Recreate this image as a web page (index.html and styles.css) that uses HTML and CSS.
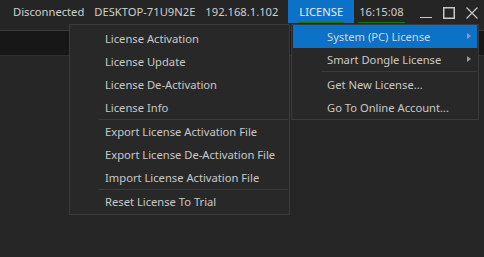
FILE: index.html
```html
<!DOCTYPE html>
<html lang="en">
<head>
  <meta charset="UTF-8">
  <title>License</title>
  <meta name="viewport" content="width=device-width, initial-scale=1.0">
  <link rel="stylesheet" href="styles.css">
</head>
<body>
  <div class="titlebar">
    <span class="status">Disconnected</span>
    <span class="status">DESKTOP-71U9N2E</span>
    <span class="status">192.168.1.102</span>
    <span class="license-btn"><span class="mark">LICENSE</span></span>
    <span class="clock"><span class="mark">16:15:08</span></span>
    <div class="controls">
      <span class="ctl">
        <svg width="12" height="12" viewBox="0 0 12 12"><line x1="0" y1="10.5" x2="12" y2="10.5" stroke="#c8c8c8" stroke-width="1"/></svg>
      </span>
      <span class="ctl">
        <svg width="12" height="12" viewBox="0 0 12 12"><rect x="0.75" y="0.75" width="10.5" height="10.5" fill="none" stroke="#c8c8c8" stroke-width="1.5"/></svg>
      </span>
      <span class="ctl">
        <svg width="12" height="12" viewBox="0 0 12 12"><path d="M0.5 0.5 L11.5 11.5 M11.5 0.5 L0.5 11.5" stroke="#c8c8c8" stroke-width="1.2"/></svg>
      </span>
    </div>
  </div>
  <div class="toolbar"></div>
  <div class="workspace"></div>

  <!-- sous-menu System (PC) License -->
  <div class="menu menu-system">
    <div class="item">License Activation</div>
    <div class="item">License Update</div>
    <div class="item">License De-Activation</div>
    <div class="item">License Info</div>
    <div class="sep"></div>
    <div class="item">Export License Activation File</div>
    <div class="item">Export License De-Activation File</div>
    <div class="item">Import License Activation File</div>
    <div class="sep"></div>
    <div class="item">Reset License To Trial</div>
  </div>

  <!-- menu LICENSE -->
  <div class="menu menu-license">
    <div class="item active">System (PC) License<span class="arrow"></span></div>
    <div class="item">Smart Dongle License<span class="arrow"></span></div>
    <div class="sep"></div>
    <div class="item">Get New License...</div>
    <div class="item">Go To Online Account...</div>
  </div>
</body>
</html>
```

FILE: styles.css
```css
html, body {
  height: 100%;
  margin: 0;
  padding: 0;
  background-color: #262626;
  color: #d0d0d0;
  font-family: 'Noto Sans', 'Open Sans', sans-serif;
  font-size: 11.2px;
  overflow: hidden;
}

.titlebar {
  height: 30px;
  display: flex;
  align-items: flex-start;
  padding-left: 13px;
  background-color: #252525;
  border-bottom: 1px solid #3a3a3a;
}

.status {
  line-height: 24px;
  margin-right: 10px;
  white-space: nowrap;
  flex-shrink: 0;
}

.license-btn {
  display: flex;
  height: 23px;
  padding: 0 10px;
  background-color: #0c72c7;
  color: #ececec;
  flex-shrink: 0;
}

.clock {
  display: flex;
  height: 23px;
  margin-left: 4px;
  flex-shrink: 0;
}

.mark {
  line-height: 23px;
  height: 22px;
  padding: 0 1px;
  border-bottom: 1px solid #0f7a12;
}

.controls {
  display: flex;
  margin-left: auto;
  padding-right: 1px;
  flex-shrink: 0;
}

.ctl {
  width: 23px;
  height: 23px;
  display: flex;
  align-items: center;
  justify-content: center;
  margin-top: 1px;
}

.toolbar {
  height: 24px;
  background-color: #171717;
  border-bottom: 1px solid #2e2e2e;
}

.menu {
  position: absolute;
  top: 24px;
  background-color: #282828;
  border: 1px solid #3a3a3a;
  color: #c8c8c8;
}

.menu-system {
  left: 69px;
  width: 217px;
  padding: 2px 1px 1px;
}

.menu-license {
  left: 291px;
  width: 184px;
  padding: 0 1px;
}

.item {
  position: relative;
  height: 23px;
  line-height: 23px;
  padding-left: 34px;
  white-space: nowrap;
}

.item.active {
  background-color: #0c72c7;
  color: #d2d6da;
}

.arrow {
  position: absolute;
  right: 6px;
  top: 8px;
  width: 0;
  height: 0;
  border-top: 3px solid transparent;
  border-bottom: 3px solid transparent;
  border-left: 4px solid #9a9a9a;
}

.menu-system .sep {
  height: 1px;
  margin-left: 28px;
  background-color: #3a3a3a;
}

.menu-license .sep {
  height: 1px;
  margin: 0 0 1px 28px;
  background-color: #3a3a3a;
}
```
